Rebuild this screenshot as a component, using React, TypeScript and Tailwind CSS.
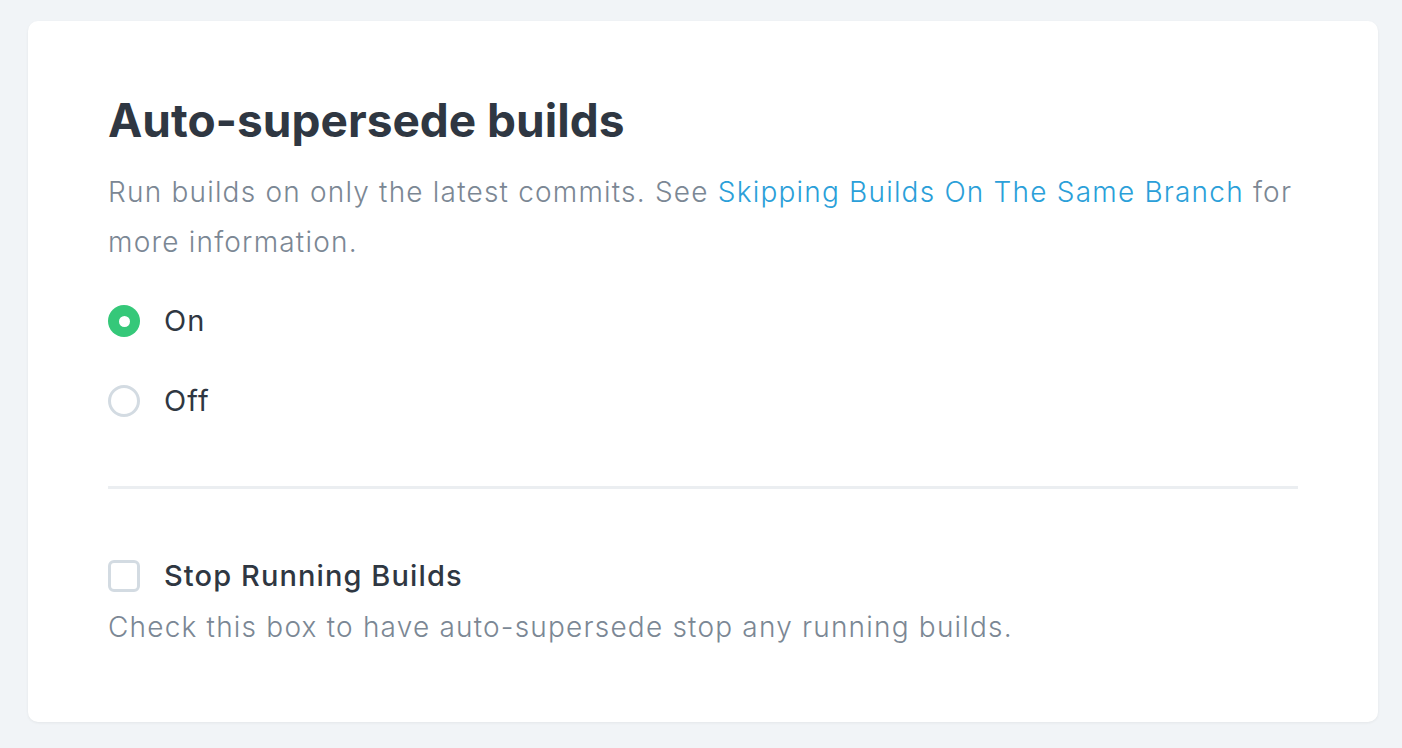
export default function App() {
  return (
    <div className="min-h-screen bg-[#f1f4f7] pt-[21px] pr-[24px] pb-[27px] pl-[28px] font-['Inter',sans-serif]">
      <div className="rounded-[10px] bg-white pt-[71px] pr-[80px] pb-[77px] pl-[80px] shadow-[0_1px_3px_rgba(0,0,0,0.06)]">
        <h2 className="text-[46px] font-bold leading-[56px] text-[#2f3742]">Auto-supersede builds</h2>
        <p className="mt-[19px] text-[28px] font-light leading-[50px] tracking-[1.2px] text-[#7b8794]">
          Run builds on only the latest commits. See{" "}
          <a className="text-[#2b9fd9]">Skipping Builds On The Same Branch</a> for more information.
        </p>

        <div className="mt-[36px] flex flex-col gap-[44px]">
          <label className="flex items-center gap-[24px]">
            <span className="flex h-[32px] w-[32px] items-center justify-center rounded-full bg-[#35c879]">
              <span className="h-[11px] w-[11px] rounded-full bg-white" />
            </span>
            <span className="text-[29px] leading-[36px] tracking-[1.1px] text-[#2f3742]">On</span>
          </label>
          <label className="flex items-center gap-[24px]">
            <span className="h-[32px] w-[32px] rounded-full border-[3px] border-[#d3dbe2]" />
            <span className="text-[29px] leading-[36px] tracking-[1.1px] text-[#2f3742]">Off</span>
          </label>
        </div>

        <div className="mt-[67px] h-[3px] bg-[#ebeef1]" />

        <label className="mt-[69px] flex items-center gap-[24px]">
          <span className="h-[32px] w-[32px] rounded-[6px] border-[3px] border-[#d3dbe2]" />
          <span className="text-[29px] font-medium leading-[36px] tracking-[1.1px] text-[#2f3742]">
            Stop Running Builds
          </span>
        </label>
        <p className="mt-[15px] text-[28px] font-light leading-[36px] tracking-[1.2px] text-[#7b8794]">
          Check this box to have auto-supersede stop any running builds.
        </p>
      </div>
    </div>
  );
}
